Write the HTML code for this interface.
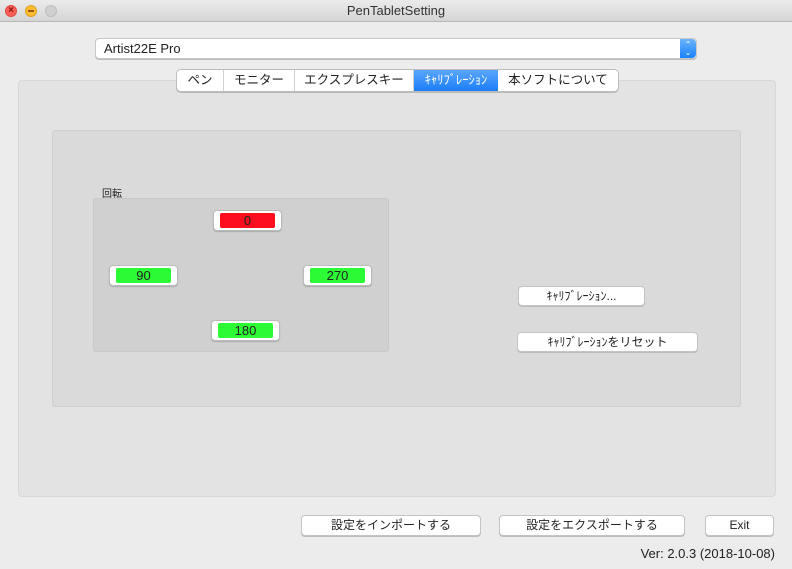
<!DOCTYPE html>
<html><head><meta charset="utf-8"><style>
*{box-sizing:border-box;margin:0;padding:0}
body{width:792px;height:569px;background:#ececec;font-family:"Liberation Sans","Noto Sans CJK JP",sans-serif;font-size:13px;color:#222;position:relative;overflow:hidden}
.a{position:absolute}
.title{left:0;top:0;width:792px;height:22px;background:linear-gradient(#ebebeb,#d5d5d5);border-bottom:1px solid #b8b8b8;text-align:center;line-height:22px;font-size:13px;color:#333}
.dot{width:12px;height:12px;border-radius:50%;top:5px}
.btn{background:#fff;border:1px solid #c4c4c4;border-radius:4px;text-align:center;box-shadow:0 1px 0 #bdbdbd;font-size:12px;color:#222}
.rb{background:#fff;border:1px solid #bbb;border-radius:4px;padding:2px 6px;box-shadow:0 1px 1px #aaa}
.rb div{height:15px;text-align:center;line-height:15px;font-size:13px;color:#222;border-radius:2px}
.tab{top:70px;height:21px;line-height:20px;text-align:center;font-size:12.5px;border-right:1px solid #d0d0d0;background:#fff}
</style></head><body>
<div class="a title">PenTabletSetting</div>
<div class="a dot" style="left:5px;background:#fc5f57;border:1px solid #de4a43;color:#8a1510;font-size:10px;line-height:10px;text-align:center;font-weight:bold">×</div>
<div class="a dot" style="left:25px;background:#fdbc2e;border:1px solid #dea126"><div style="margin:4px 2px;height:2px;background:#985712"></div></div>
<div class="a dot" style="left:45px;background:#d0d0d0;border:1px solid #bdbdbd"></div>

<div class="a" style="left:95px;top:38px;width:602px;height:21px;background:#fff;border:1px solid #c8c8c8;border-radius:4px;box-shadow:0 1px 0 #bcbcbd;padding-left:8px;line-height:19px;font-size:13px">Artist22E Pro</div>
<div class="a" style="left:680px;top:39px;width:16px;height:19px;background:linear-gradient(#6cb3fa,#1a82fb);border-radius:0 4px 4px 0;color:#fff;font-size:8px;line-height:8px;text-align:center;padding-top:2px">⌃<br>⌄</div>

<div class="a" style="left:18px;top:80px;width:758px;height:417px;background:#e3e3e3;border:1px solid #d8d8d8;border-radius:4px"></div>
<div class="a" style="left:176px;top:69px;width:443px;height:23px;border:1px solid #bdbdbd;border-radius:5px;background:#fff;box-shadow:0 1px 0 #b9b9b9"></div>
<div class="a tab" style="left:177px;width:47px;border-radius:4px 0 0 4px">ペン</div>
<div class="a tab" style="left:224px;width:71px">モニター</div>
<div class="a tab" style="left:295px;width:119px">エクスプレスキー</div>
<div class="a tab" style="left:414px;width:84px;background:linear-gradient(#5aa6fb,#1c7ef8);color:#fff;border-right:none">ｷｬﾘﾌﾞﾚｰｼｮﾝ</div>
<div class="a tab" style="left:498px;width:120px;border-right:none;border-radius:0 4px 4px 0">本ソフトについて</div>

<div class="a" style="left:52px;top:130px;width:689px;height:277px;background:#dadada;border:1px solid #cfcfcf;border-radius:3px"></div>
<div class="a" style="left:102px;top:185px;font-size:10px">回転</div>
<div class="a" style="left:93px;top:198px;width:296px;height:154px;background:#d0d0d0;border:1px solid #c8c8c8;border-radius:3px"></div>

<div class="a rb" style="left:213px;top:210px;width:69px;height:21px"><div style="background:#fc0e1e">0</div></div>
<div class="a rb" style="left:109px;top:265px;width:69px;height:21px"><div style="background:#2bfa35">90</div></div>
<div class="a rb" style="left:303px;top:265px;width:69px;height:21px"><div style="background:#2bfa35">270</div></div>
<div class="a rb" style="left:211px;top:320px;width:69px;height:21px"><div style="background:#2bfa35">180</div></div>

<div class="a btn" style="left:518px;top:286px;width:127px;height:20px;line-height:18px">ｷｬﾘﾌﾞﾚｰｼｮﾝ...</div>
<div class="a btn" style="left:517px;top:332px;width:181px;height:20px;line-height:18px">ｷｬﾘﾌﾞﾚｰｼｮﾝをリセット</div>

<div class="a btn" style="left:301px;top:515px;width:180px;height:21px;line-height:19px">設定をインポートする</div>
<div class="a btn" style="left:499px;top:515px;width:186px;height:21px;line-height:19px">設定をエクスポートする</div>
<div class="a btn" style="left:705px;top:515px;width:69px;height:21px;line-height:19px">Exit</div>
<div class="a" style="right:17px;top:546px;font-size:13px">Ver: 2.0.3 (2018-10-08)</div>
</body></html>
